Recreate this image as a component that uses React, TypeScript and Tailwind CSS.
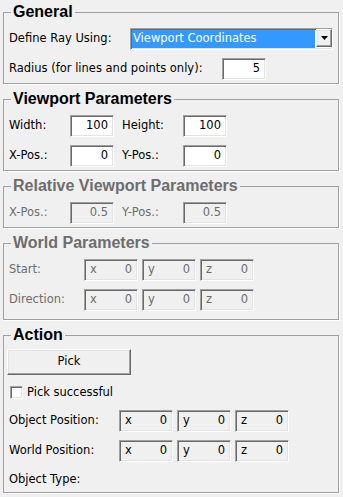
import React from "react";
import { clsx as cn } from "clsx";

const sunken =
  "border border-t-[#a0a0a0] border-l-[#a0a0a0] border-b-white border-r-white shadow-[inset_1px_1px_0_#696969,inset_-1px_-1px_0_#e3e3e3]";
const raised =
  "border border-t-white border-l-white border-b-[#696969] border-r-[#696969] shadow-[inset_-1px_-1px_0_#a0a0a0,inset_1px_1px_0_#e3e3e3]";

function Group({
  title,
  disabled,
  className,
  children,
}: {
  title: string;
  disabled?: boolean;
  className?: string;
  children: React.ReactNode;
}) {
  return (
    <fieldset
      className={cn(
        "ml-[3px] mr-[4px] border border-[#a0a0a0] px-[5px] shadow-[1px_1px_0_#fff]",
        className ?? "pb-[3px]",
      )}
    >
      <legend
        className={cn(
          "ml-[2px] h-[18px] px-[2px] font-['Liberation_Sans',Arial,sans-serif] text-[16px] font-bold leading-[18px]",
          disabled ? "text-[#6d6d6d]" : "text-black",
        )}
      >
        {title}
      </legend>
      {children}
    </fieldset>
  );
}

function NumBox({ value, disabled }: { value: string; disabled?: boolean }) {
  return (
    <div
      className={cn(
        "flex h-[22px] w-[44px] shrink-0 items-center justify-end pr-[5px]",
        sunken,
        disabled ? "bg-[#f0f0f0] text-[#6d6d6d]" : "bg-white text-black",
      )}
    >
      {value}
    </div>
  );
}

function Vec({ disabled }: { disabled?: boolean }) {
  return (
    <div className="flex gap-[4px]">
      {["x", "y", "z"].map((a) => (
        <div
          key={a}
          className={cn(
            "flex h-[22px] w-[54px] items-center justify-between bg-[#f0f0f0] px-[5px]",
            sunken,
            disabled ? "text-[#6d6d6d]" : "text-black",
          )}
        >
          <span>{a}</span>
          <span>0</span>
        </div>
      ))}
    </div>
  );
}

export default function App() {
  return (
    <div className="flex h-[497px] w-[343px] flex-col gap-[6px] bg-[#f0f0f0] pt-[3px] font-['DejaVu_Sans',Tahoma,sans-serif] text-[11.5px] text-black">
      <Group title="General">
        <div className="mt-[7px] flex h-[22px] items-center">
          <span className="w-[121px]">Define Ray Using:</span>
          <div className={cn("flex h-[22px] w-[203px] bg-white", sunken)}>
            <div className="m-[1px] flex flex-1 items-center bg-[#3399ff] pl-[1px] text-white">
              Viewport Coordinates
            </div>
            <div
              className={cn(
                "flex h-[18px] w-[16px] items-center justify-center bg-[#f0f0f0]",
                raised,
              )}
            >
              <svg width="7" height="4" viewBox="0 0 7 4">
                <path d="M0 0h7L3.5 4z" fill="#000" />
              </svg>
            </div>
          </div>
        </div>
        <div className="mt-[8px] flex h-[22px] items-center">
          <span className="w-[213px]">Radius (for lines and points only):</span>
          <NumBox value="5" />
        </div>
      </Group>

      <Group title="Viewport Parameters">
        <div className="mt-[7px] flex h-[22px] items-center">
          <span className="w-[61px]">Width:</span>
          <NumBox value="100" />
          <span className="w-[69px] pl-[8px]">Height:</span>
          <NumBox value="100" />
        </div>
        <div className="mt-[8px] flex h-[22px] items-center">
          <span className="w-[61px]">X-Pos.:</span>
          <NumBox value="0" />
          <span className="w-[69px] pl-[8px]">Y-Pos.:</span>
          <NumBox value="0" />
        </div>
      </Group>

      <Group title="Relative Viewport Parameters" disabled>
        <div className="mt-[7px] flex h-[22px] items-center text-[#6d6d6d]">
          <span className="w-[61px]">X-Pos.:</span>
          <NumBox value="0.5" disabled />
          <span className="w-[69px] pl-[8px]">Y-Pos.:</span>
          <NumBox value="0.5" disabled />
        </div>
      </Group>

      <Group title="World Parameters" disabled className="pb-[8px]">
        <div className="mt-[7px] flex h-[22px] items-center text-[#6d6d6d]">
          <span className="w-[75px]">Start:</span>
          <Vec disabled />
        </div>
        <div className="mt-[8px] flex h-[22px] items-center text-[#6d6d6d]">
          <span className="w-[75px]">Direction:</span>
          <Vec disabled />
        </div>
      </Group>

      <Group title="Action" className="pb-[2px]">
        <button
          type="button"
          className={cn(
            "mt-[5px] -ml-[2px] flex h-[26px] w-[124px] items-center justify-center bg-[#f0f0f0]",
            raised,
          )}
        >
          Pick
        </button>
        <label className="mt-[11px] ml-[1px] flex h-[13px] items-center gap-[4px]">
          <span className={cn("h-[13px] w-[13px] bg-white", sunken)} />
          <span>Pick successful</span>
        </label>
        <div className="mt-[11px] flex h-[22px] items-center">
          <span className="w-[110px]">Object Position:</span>
          <Vec />
        </div>
        <div className="mt-[8px] flex h-[22px] items-center">
          <span className="w-[110px]">World Position:</span>
          <Vec />
        </div>
        <div className="mt-[8px] flex h-[20px] items-center">Object Type:</div>
      </Group>
    </div>
  );
}
